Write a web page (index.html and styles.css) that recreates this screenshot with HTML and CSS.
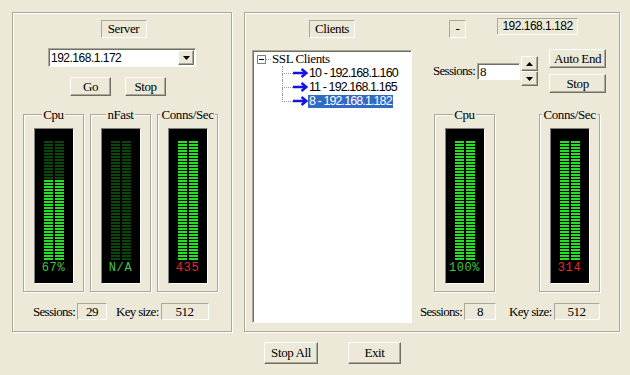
FILE: index.html
```html
<!DOCTYPE html>
<html lang="en">
<head>
  <meta charset="UTF-8">
  <title>SSL Load Tester</title>
  <link rel="stylesheet" href="styles.css">
</head>
<body>
  <div class="window">
    <div class="panels">

      <section class="panel server">
        <div class="caption">Server</div>
        <div class="combo">
          <span>192.168.1.172</span>
          <span class="combo-btn">
            <svg width="7" height="4" viewBox="0 0 7 4"><path d="M0 0H7L3.5 4Z" fill="#000"/></svg>
          </span>
        </div>
        <div class="btn-row">
          <button class="btn btn-small">Go</button>
          <button class="btn btn-small">Stop</button>
        </div>

        <div class="meters">
          <div class="meter">
            <span class="meter-title">Cpu</span>
            <div class="screen">
              <div class="bars">
                <div class="col"><div class="fill" style="height:81px"></div></div>
                <div class="col"><div class="fill" style="height:81px"></div></div>
              </div>
              <div class="readout">67%</div>
            </div>
          </div>
          <div class="meter">
            <span class="meter-title">nFast</span>
            <div class="screen">
              <div class="bars">
                <div class="col"><div class="fill" style="height:0px"></div></div>
                <div class="col"><div class="fill" style="height:0px"></div></div>
              </div>
              <div class="readout">N/A</div>
            </div>
          </div>
          <div class="meter">
            <span class="meter-title">Conns/Sec</span>
            <div class="screen">
              <div class="bars">
                <div class="col"><div class="fill" style="height:120px"></div></div>
                <div class="col"><div class="fill" style="height:120px"></div></div>
              </div>
              <div class="readout red">435</div>
            </div>
          </div>
        </div>

        <div class="stats">
          <span class="stat-label">Sessions:</span>
          <span class="field f-sess">29</span>
          <span class="stat-label key">Key size:</span>
          <span class="field f-key">512</span>
        </div>
      </section>

      <section class="panel clients">
        <div class="caption clients-caption">Clients</div>
        <div class="client-head">
          <span class="field status">-</span>
          <span class="field ip">192.168.1.182</span>
        </div>

        <div class="tree">
          <div class="node root">
            <span class="toggle"></span>
            <span class="root-link"></span>
            <span class="node-text">SSL Clients</span>
          </div>
          <div class="children">
            <div class="node child">
              <span class="branch"></span>
              <svg class="arrow" width="15" height="10" viewBox="0 0 15 10"><path d="M0 5H13.5M8.5 1L13.5 5L8.5 9" fill="none" stroke="#1414dc" stroke-width="2.4"/></svg>
              <span class="node-text">10 - 192.168.1.160</span>
            </div>
            <div class="node child">
              <span class="branch"></span>
              <svg class="arrow" width="15" height="10" viewBox="0 0 15 10"><path d="M0 5H13.5M8.5 1L13.5 5L8.5 9" fill="none" stroke="#1414dc" stroke-width="2.4"/></svg>
              <span class="node-text">11 - 192.168.1.165</span>
            </div>
            <div class="node child">
              <span class="branch"></span>
              <svg class="arrow" width="15" height="10" viewBox="0 0 15 10"><path d="M0 5H13.5M8.5 1L13.5 5L8.5 9" fill="none" stroke="#1414dc" stroke-width="2.4"/></svg>
              <span class="node-text selected">8 - 192.168.1.182</span>
            </div>
          </div>
        </div>

        <div class="client-side">
          <div class="controls">
            <div class="sess-group">
              <span class="stat-label">Sessions:</span>
              <span class="input">8</span>
              <span class="spin">
                <span class="spin-btn"><svg width="7" height="4" viewBox="0 0 7 4"><path d="M0 4H7L3.5 0Z" fill="#000"/></svg></span>
                <span class="spin-btn"><svg width="7" height="4" viewBox="0 0 7 4"><path d="M0 0H7L3.5 4Z" fill="#000"/></svg></span>
              </span>
            </div>
            <div class="ctrl-buttons">
              <button class="btn btn-wide">Auto End</button>
              <button class="btn btn-wide">Stop</button>
            </div>
          </div>

          <div class="meters meters-right">
            <div class="meter">
              <span class="meter-title">Cpu</span>
              <div class="screen">
                <div class="bars">
                  <div class="col"><div class="fill" style="height:120px"></div></div>
                  <div class="col"><div class="fill" style="height:120px"></div></div>
                </div>
                <div class="readout">100%</div>
              </div>
            </div>
            <div class="meter">
              <span class="meter-title">Conns/Sec</span>
              <div class="screen">
                <div class="bars">
                  <div class="col"><div class="fill" style="height:120px"></div></div>
                  <div class="col"><div class="fill" style="height:120px"></div></div>
                </div>
                <div class="readout red">314</div>
              </div>
            </div>
          </div>

          <div class="stats">
            <span class="stat-label">Sessions:</span>
            <span class="field f-sess2">8</span>
            <span class="stat-label key">Key size:</span>
            <span class="field f-key2">512</span>
          </div>
        </div>
      </section>

    </div>

    <div class="actions">
      <button class="btn btn-action">Stop All</button>
      <button class="btn btn-action btn-exit">Exit</button>
    </div>
  </div>
</body>
</html>
```

FILE: styles.css
```css
:root {
  --face: #ECE9D8;
  --shadow: #ACA899;
  --dark: #716F64;
  --lit: #FFFFFF;
  --dim: #0A460A;
  --led: #22E222;
  --select: #316AC5;
}

* {
  box-sizing: border-box;
  margin: 0;
  padding: 0;
}

body {
  background-color: var(--face);
  color: #000;
  font-family: 'Liberation Serif', serif;
  font-size: 13px;
  letter-spacing: -0.4px;
  width: 630px;
  height: 375px;
  overflow: hidden;
}

.window {
  padding: 12px 0 0 12px;
}

.panels {
  display: flex;
  gap: 12px;
}

.panel {
  height: 320px;
  border: 1px solid var(--shadow);
  box-shadow: inset 1px 1px var(--lit), 1px 1px var(--lit);
}

/* sunken static boxes */
.caption,
.field {
  border: 1px solid;
  border-color: var(--shadow) var(--lit) var(--lit) var(--shadow);
  text-align: center;
}

.caption {
  width: 46px;
  height: 18px;
  line-height: 16px;
}

.field {
  height: 17px;
  line-height: 15px;
}

.btn {
  font: inherit;
  letter-spacing: inherit;
  color: #000;
  background-color: var(--face);
  border: 1px solid;
  border-color: var(--lit) var(--dark) var(--dark) var(--lit);
  box-shadow: inset -1px -1px var(--shadow);
  height: 19px;
}

.btn-small { width: 41px; }
.btn-wide { width: 57px; }
.btn-action { width: 54px; height: 22px; }
.btn-exit { width: 53px; }

/* server panel */
.server {
  width: 220px;
  display: flex;
  flex-direction: column;
  align-items: center;
  padding-top: 7px;
}

.server .caption {
  margin-left: 3px;
}

.combo {
  margin-top: 10px;
  width: 148px;
  height: 19px;
  display: flex;
  align-items: center;
  justify-content: space-between;
  padding: 0 1px 0 2px;
  background-color: #fff;
  border: 1px solid;
  border-color: var(--shadow) var(--lit) var(--lit) var(--shadow);
  box-shadow: inset 1px 1px var(--dark);
  font-family: 'Liberation Sans', sans-serif;
  font-size: 12px;
  letter-spacing: -0.5px;
}

.combo-btn,
.spin-btn {
  display: flex;
  align-items: center;
  justify-content: center;
  background-color: var(--face);
  border: 1px solid;
  border-color: var(--lit) var(--dark) var(--dark) var(--lit);
  box-shadow: inset -1px -1px var(--shadow);
}

.combo-btn {
  width: 16px;
  height: 15px;
}

.btn-row {
  margin-top: 10px;
  margin-right: 8px;
  display: flex;
  gap: 14px;
}

/* meters */
.meters {
  margin-top: 18px;
  align-self: stretch;
  display: flex;
  gap: 6px;
  padding: 0 10px;
}

.meter {
  width: 61px;
  height: 178px;
  display: flex;
  flex-direction: column;
  align-items: center;
  border: 1px solid var(--shadow);
  box-shadow: inset 1px 1px var(--lit), 1px 1px var(--lit);
}

.meter-title {
  margin-top: -8px;
  padding: 0 1px;
  line-height: 15px;
  background-color: var(--face);
}

.screen {
  margin-top: 6px;
  width: 40px;
  height: 156px;
  display: flex;
  flex-direction: column;
  align-items: center;
  padding-top: 12px;
  background-color: #000;
  border: 1px solid;
  border-color: #808080 var(--lit) var(--lit) #808080;
}

.bars {
  display: flex;
  gap: 2px;
  height: 120px;
}

.col {
  width: 9px;
  height: 120px;
  display: flex;
  align-items: flex-end;
  background: linear-gradient(var(--dim) 0 2px, transparent 2px) 0 100% / 100% 3px repeat-y;
}

.fill {
  width: 100%;
  background: linear-gradient(var(--led) 0 2px, transparent 2px) 0 100% / 100% 3px repeat-y;
}

.readout {
  margin-top: 1px;
  font-family: 'Liberation Mono', monospace;
  font-size: 12px;
  line-height: 12px;
  letter-spacing: 0.6px;
  color: #44C444;
}

.readout.red {
  color: #E82828;
}

/* stats row */
.stats {
  margin-top: 11px;
  align-self: stretch;
  display: flex;
  align-items: center;
  padding-left: 20px;
}

.stat-label {
  margin-right: 2px;
  letter-spacing: -0.7px;
}

.stat-label.key {
  margin-left: 9px;
}

.f-sess { width: 30px; }
.f-key { width: 48px; }
.f-sess2 { width: 32px; }
.f-key2 { width: 46px; }

/* clients panel */
.clients {
  width: 376px;
  display: grid;
  grid-template-columns: 160px 1fr;
  grid-template-rows: 31px 1fr;
  column-gap: 8px;
  padding: 6px 0 0 7px;
}

.clients-caption {
  justify-self: center;
  margin-top: 1px;
}

.client-head {
  display: flex;
  align-items: flex-start;
  padding-left: 29px;
}

.status {
  width: 17px;
  height: 18px;
  margin-top: 1px;
}

.ip {
  width: 81px;
  margin-left: 31px;
  margin-top: -1px;
  font-family: 'Liberation Sans', sans-serif;
  font-size: 12px;
  letter-spacing: -0.5px;
}

.tree {
  height: 273px;
  padding-top: 1px;
  background-color: #fff;
  border: 1px solid;
  border-color: var(--shadow) var(--lit) var(--lit) var(--shadow);
  box-shadow: inset 1px 1px var(--dark);
}

.node {
  display: flex;
  align-items: center;
  height: 14px;
  white-space: nowrap;
}

.toggle {
  width: 9px;
  height: 9px;
  margin-left: 4px;
  display: flex;
  align-items: center;
  justify-content: center;
  border: 1px solid #808080;
  background-color: #fff;
}

.toggle::after {
  content: '';
  width: 5px;
  height: 1px;
  background-color: #000;
}

.root-link {
  width: 5px;
  margin-right: 1px;
  border-top: 1px dotted #999;
}

.node-text {
  line-height: 14px;
}

.children {
  margin-left: 29px;
}

.branch {
  width: 11px;
  height: 14px;
  display: flex;
  flex-direction: column;
}

.branch::before {
  content: '';
  height: 7px;
  border-left: 1px dotted #999;
  border-bottom: 1px dotted #999;
}

.branch::after {
  content: '';
  flex: 1;
  border-left: 1px dotted #999;
}

.child:last-child .branch::after {
  border-left: none;
}

.child .node-text {
  padding: 0 1px;
  line-height: 13px;
  font-family: 'Liberation Sans', sans-serif;
  font-size: 12.5px;
  letter-spacing: -0.9px;
}

.child .node-text.selected {
  background-color: var(--select);
  color: #fff;
}

.client-side {
  display: flex;
  flex-direction: column;
}

.controls {
  display: flex;
  align-items: center;
  height: 42px;
}

.sess-group {
  display: flex;
  align-items: center;
  margin-left: 13px;
}

.sess-group .stat-label {
  margin-right: 0;
}

.input {
  width: 43px;
  height: 17px;
  margin-left: 2px;
  padding-left: 2px;
  line-height: 15px;
  background-color: #fff;
  border: 1px solid;
  border-color: var(--shadow) var(--lit) var(--lit) var(--shadow);
  box-shadow: inset 1px 1px var(--dark);
}

.spin {
  display: flex;
  flex-direction: column;
  margin-left: 1px;
}

.spin-btn {
  width: 17px;
  height: 15px;
}

.ctrl-buttons {
  display: flex;
  flex-direction: column;
  gap: 6px;
  margin-left: 11px;
}

.meters-right {
  margin-top: 22px;
  gap: 44px;
  padding: 0 0 0 14px;
}

.client-side .stats {
  padding-left: 0;
}

.client-side .stat-label.key {
  margin-left: 13px;
}

.actions {
  display: flex;
  gap: 30px;
  margin: 10px 0 0 252px;
}
```
